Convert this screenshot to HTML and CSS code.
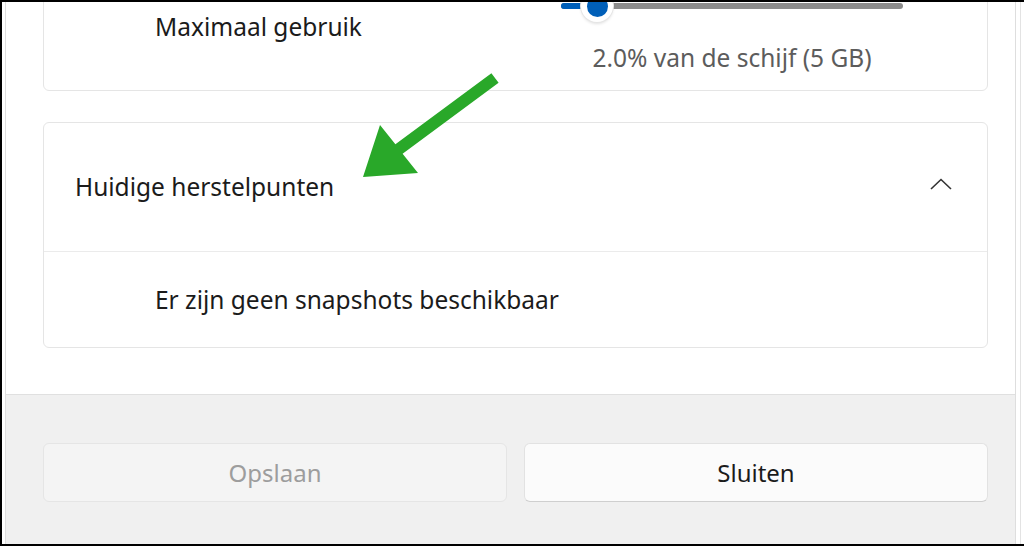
FILE: index.html
```html
<!DOCTYPE html>
<html lang="nl">
<head>
  <meta charset="UTF-8">
  <meta name="viewport" content="width=device-width, initial-scale=1.0">
  <title>Systeembeveiliging</title>
  <link rel="stylesheet" href="styles.css">
</head>
<body>
  <div class="window">
    <div class="dialog">
      <div class="content">
        <div class="card usage">
          <div class="usage-label">Maximaal gebruik</div>
          <div class="usage-control">
            <div class="slider">
              <div class="slider-track"></div>
              <div class="slider-fill"></div>
              <div class="slider-thumb"><span></span></div>
            </div>
            <div class="usage-caption">2.0% van de schijf (5 GB)</div>
          </div>
        </div>

        <div class="card points">
          <div class="points-header">
            <span>Huidige herstelpunten</span>
            <svg class="chevron" width="22" height="12" viewBox="0 0 22 12">
              <path d="M1 11 L11 1.5 L21 11" fill="none" stroke="#333" stroke-width="1.6"/>
            </svg>
          </div>
          <div class="points-row">Er zijn geen snapshots beschikbaar</div>
        </div>
      </div>

      <div class="footer">
        <button class="btn" disabled>Opslaan</button>
        <button class="btn primary">Sluiten</button>
      </div>
    </div>
    <div class="window-edge"></div>
  </div>

  <svg class="arrow" width="1024" height="546" viewBox="0 0 1024 546">
    <polygon fill="#29a829" points="491.4,73.2 498.6,82.8 402.6,153.8 418,173 363,177 380,125 395.4,144.2"/>
  </svg>
</body>
</html>
```

FILE: styles.css
```css
body {
  margin: 0;
  width: 1024px;
  height: 546px;
  overflow: hidden;
  font-family: 'Noto Sans', 'Open Sans', sans-serif;
  font-size: 24.5px;
  line-height: 32px;
  color: #1b1b1b;
  background: #fff;
  position: relative;
}
.window {
  display: flex;
  height: 546px;
  box-sizing: border-box;
  border-top: 2px solid #000;
  border-left: 2px solid #000;
  border-bottom: 2px solid #000;
  padding-left: 3px;
}
.dialog {
  width: 1012px;
  box-sizing: border-box;
  border-left: 1px solid #dedede;
  border-right: 1px solid #dedede;
  display: flex;
  flex-direction: column;
}
.window-edge {
  margin-left: 4px;
  width: 3px;
  border-left: 1px solid #e3e3e3;
}
.content {
  flex: 1;
  padding: 0 27px 0 37px;
  overflow: hidden;
}
.card {
  background: #fff;
  border: 1px solid #e5e5e5;
  border-radius: 6px;
}
.usage {
  margin-top: -40px;
  height: 129px;
  box-sizing: border-box;
  padding: 27px 0 0 111px;
  display: grid;
  grid-template-columns: 406px 342px;
  align-items: start;
}
.usage-label {
  margin-top: 21px;
}
.slider {
  position: relative;
  height: 32px;
}
.slider-track {
  position: absolute;
  left: 0;
  right: 0;
  top: 13px;
  height: 6px;
  border-radius: 3px;
  background: #8b8b8b;
}
.slider-fill {
  position: absolute;
  left: 0;
  width: 30px;
  top: 13px;
  height: 6px;
  border-radius: 3px;
  background: #005fb8;
}
.slider-thumb {
  position: absolute;
  left: 20px;
  top: 0;
  width: 32px;
  height: 32px;
  border-radius: 50%;
  background: #fff;
  box-shadow: 0 0 0 1px #e6e6e6, 0 2px 3px rgba(0,0,0,0.12);
  display: flex;
  align-items: center;
  justify-content: center;
}
.slider-thumb span {
  width: 21px;
  height: 21px;
  border-radius: 50%;
  background: #005fb8;
}
.usage-caption {
  margin-top: 20px;
  text-align: center;
  color: #5c5c5c;
}
.points {
  margin-top: 31px;
}
.points-header {
  height: 128px;
  padding: 0 35px 0 31px;
  display: flex;
  align-items: center;
  justify-content: space-between;
  border-bottom: 1px solid #ebebeb;
}
.chevron {
  margin-top: -6px;
}
.points-row {
  height: 95px;
  padding-left: 111px;
  display: flex;
  align-items: center;
}
.footer {
  height: 150px;
  box-sizing: border-box;
  background: #f0f0f0;
  border-top: 1px solid #e0e0e0;
  padding: 48px 27px 0 37px;
  display: grid;
  grid-template-columns: 1fr 1fr;
  gap: 17px;
  align-items: start;
}
.btn {
  height: 59px;
  font-family: inherit;
  font-size: 24px;
  border-radius: 6px;
  border: 1px solid #e2e2e2;
  border-bottom-color: #cfcfcf;
  background: #fbfbfb;
  color: #1b1b1b;
}
.btn:disabled {
  background: #f4f4f4;
  border-color: #e5e5e5;
  color: #9d9d9d;
}
.arrow {
  position: absolute;
  left: 0;
  top: 0;
  pointer-events: none;
}
```
